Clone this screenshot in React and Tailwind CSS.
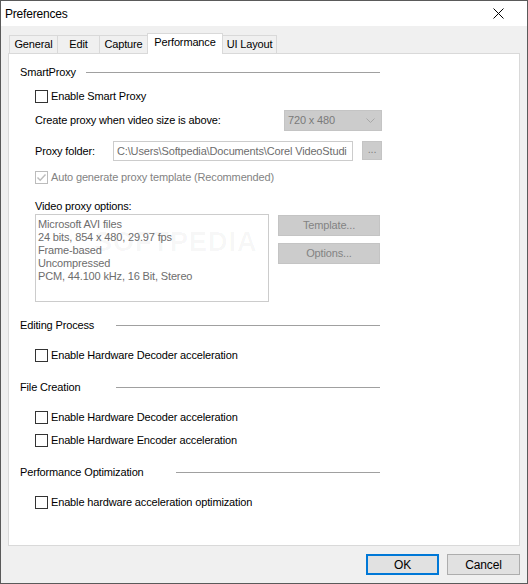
import React from "react";

function Check({ checked = false, disabled = false }) {
  return (
    <div
      className={
        "w-[13px] h-[13px] shrink-0 border bg-white flex items-center justify-center " +
        (disabled ? "border-[#bcbcbc]" : "border-[#333333]")
      }
    >
      {checked && (
        <svg width="11" height="11" viewBox="0 0 11 11">
          <path d="M1.5 5.5 L4.2 8.3 L9.5 2.5" fill="none" stroke="#bcbcbc" strokeWidth="1.4" />
        </svg>
      )}
    </div>
  );
}

function CheckRow({ label, checked, disabled, className = "" }) {
  return (
    <div className={"flex items-center h-[16px] ml-[15px] " + className}>
      <Check checked={checked} disabled={disabled} />
      <span className={"ml-[3px] " + (disabled ? "text-[#838383]" : "text-black")}>{label}</span>
    </div>
  );
}

function Header({ label, w, className = "" }) {
  return (
    <div className={"flex items-center h-[16px] w-[360px] " + className}>
      <span className="shrink-0" style={{ width: w }}>
        {label}
      </span>
      <div className="flex-1 h-px bg-[#a0a0a0]" />
    </div>
  );
}

export default function App() {
  return (
    <div className="w-[528px] h-[584px] border border-[#5a5a5a] bg-[#f0f0f0] flex flex-col text-[11px] tracking-[-0.15px] text-black font-['Liberation_Sans',Arial,sans-serif] leading-none overflow-hidden">
      {/* Title bar */}
      <div className="h-[25px] bg-white flex items-center justify-between pl-[4px] pr-[23px] shrink-0">
        <span className="text-[12px] tracking-[-0.2px]">Preferences</span>
        <svg width="11" height="11" viewBox="0 0 11 11">
          <path d="M0.5 0.5 L10.5 10.5 M10.5 0.5 L0.5 10.5" stroke="#000" strokeWidth="1" />
        </svg>
      </div>

      {/* Tabs */}
      <div className="mt-[7px] ml-[8px] h-[20px] flex items-end shrink-0 relative z-10">
        <div className="w-[49px] h-[18px] border border-b-0 border-[#d9d9d9] bg-[#f0f0f0] flex items-center justify-center">General</div>
        <div className="w-[43px] h-[18px] -ml-px border border-b-0 border-[#d9d9d9] bg-[#f0f0f0] flex items-center justify-center">Edit</div>
        <div className="w-[49px] h-[18px] -ml-px border border-b-0 border-[#d9d9d9] bg-[#f0f0f0] flex items-center justify-center">Capture</div>
        <div className="w-[76px] h-[21px] -ml-px -mb-px border border-b-0 border-[#d9d9d9] bg-white flex items-center justify-center pb-[3px] relative z-10">Performance</div>
        <div className="w-[55px] h-[18px] -ml-px border border-b-0 border-[#d9d9d9] bg-[#f0f0f0] flex items-center justify-center">UI Layout</div>
      </div>

      {/* Panel */}
      <div className="ml-[7px] w-[512px] h-[493px] border border-[#d9d9d9] bg-white shrink-0 flex flex-col pl-[11px]">
        <Header label="SmartProxy" w={66} className="mt-[10px]" />
        <CheckRow label="Enable Smart Proxy" className="mt-[8px]" />

        <div className="flex items-center h-[21px] ml-[15px] mt-[6px]">
          <span className="w-[249px] shrink-0">Create proxy when video size is above:</span>
          <div className="w-[98px] h-[21px] bg-[#cccccc] border border-[#c4c4c4] flex items-center justify-between pl-[3px] pr-[6px] text-[#7a7a7a]">
            <span>720 x 480</span>
            <svg width="9" height="5" viewBox="0 0 9 5">
              <path d="M0.5 0.5 L4.5 4.5 L8.5 0.5" fill="none" stroke="#a8a8a8" strokeWidth="1" />
            </svg>
          </div>
        </div>

        <div className="flex h-[20px] ml-[15px] mt-[10px]">
          <span className="w-[78px] shrink-0 self-center text-[#000]">Proxy folder:</span>
          <div className="w-[240px] h-[20px] border border-[#cccccc] bg-white flex items-center pl-[3px] overflow-hidden whitespace-nowrap text-[#6d6d6d]">
            <span className="overflow-hidden">C:\Users\Softpedia\Documents\Corel VideoStudi</span>
          </div>
          <div className="ml-[9px] w-[20px] h-[19px] bg-[#cccccc] border border-[#c4c4c4] flex items-center justify-center text-[#838383] pb-[3px]">
            ...
          </div>
        </div>

        <CheckRow label="Auto generate proxy template (Recommended)" checked disabled className="mt-[8px]" />

        <div className="flex items-center h-[16px] ml-[15px] mt-[13px]">Video proxy options:</div>

        <div className="flex ml-[15px]">
          <div className="relative w-[234px] h-[88px] border border-[#cccccc] pl-[2px] pt-[3px] text-[#6d6d6d] leading-[13px] overflow-hidden">
            <div className="absolute left-[58px] top-[14px] text-[27px] font-bold tracking-[1px] text-[#000000]/[0.035] leading-none">
              SOFTPEDIA
            </div>
            <div className="relative">
              <div>Microsoft AVI files</div>
              <div>24 bits, 854 x 480, 29.97 fps</div>
              <div>Frame-based</div>
              <div>Uncompressed</div>
              <div>PCM, 44.100 kHz, 16 Bit, Stereo</div>
            </div>
          </div>
          <div className="ml-[9px] flex flex-col gap-[7px] pt-[1px]">
            <div className="w-[102px] h-[21px] bg-[#cccccc] border border-[#c4c4c4] flex items-center justify-center text-[#838383]">Template...</div>
            <div className="w-[102px] h-[21px] bg-[#cccccc] border border-[#c4c4c4] flex items-center justify-center text-[#838383]">Options...</div>
          </div>
        </div>

        <Header label="Editing Process" w={96} className="mt-[15px]" />
        <CheckRow label="Enable Hardware Decoder acceleration" className="mt-[14px]" />

        <Header label="File Creation" w={96} className="mt-[16px]" />
        <CheckRow label="Enable Hardware Decoder acceleration" className="mt-[14px]" />
        <CheckRow label="Enable Hardware Encoder acceleration" className="mt-[7px]" />

        <Header label="Performance Optimization" w={156} className="mt-[16px]" />
        <CheckRow label="Enable hardware acceleration optimization" className="mt-[14px]" />
      </div>

      {/* Buttons */}
      <div className="mt-[8px] flex justify-end gap-[8px] pr-[7px] shrink-0">
        <div className="w-[73px] h-[21px] border-2 border-[#0078d7] bg-[#e1e1e1] flex items-center justify-center text-[12px]">OK</div>
        <div className="w-[73px] h-[21px] border border-[#adadad] bg-[#e1e1e1] flex items-center justify-center text-[12px]">Cancel</div>
      </div>
    </div>
  );
}
